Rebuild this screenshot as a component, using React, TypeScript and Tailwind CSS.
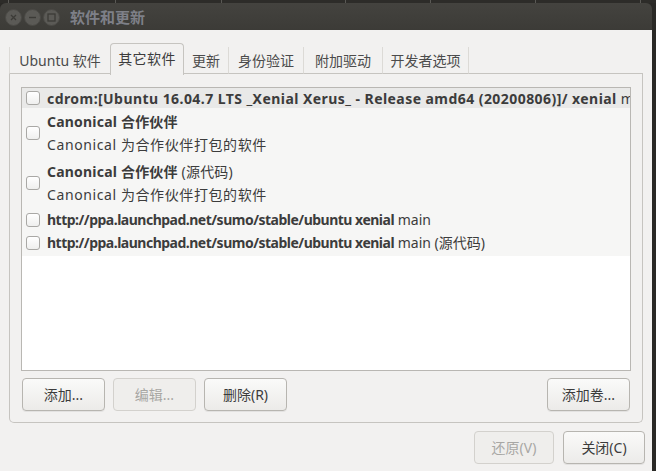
import React from "react";

const font = { fontFamily: '"Noto Sans", "Noto Sans CJK SC", sans-serif' };

function Checkbox() {
  return (
    <div className="w-[14px] h-[14px] rounded-[3px] border border-[#a9a8a5] bg-gradient-to-b from-[#ffffff] to-[#efefee] shrink-0" />
  );
}

function Btn({ children, w, disabled }: { children: React.ReactNode; w: string; disabled?: boolean }) {
  return (
    <div
      className={
        "h-[33px] rounded-[4px] border flex items-center justify-center text-[14px] " +
        w +
        (disabled
          ? " border-[#d3d1cd] bg-[#efeeec] text-[#a8a7a4]"
          : " border-[#b7b5b0] bg-gradient-to-b from-[#fafaf9] to-[#ecebe9] text-[#3c3c3c] shadow-[0_1px_0_rgba(0,0,0,0.06)]")
      }
    >
      {children}
    </div>
  );
}

export default function App() {
  const tabs = [
    { t: "Ubuntu 软件", w: "w-[101px]" },
    { t: "其它软件", w: "w-[74px]", active: true },
    { t: "更新", w: "w-[45px]" },
    { t: "身份验证", w: "w-[75px]" },
    { t: "附加驱动", w: "w-[79px]" },
    { t: "开发者选项", w: "w-[86px]" },
  ];
  return (
    <div className="w-[656px] h-[471px] bg-[#2a2926] overflow-hidden relative" style={font}>
      <div className="h-[3px] relative bg-[#2d2c29]">
        <div className="absolute left-[8px] top-0 w-px h-[3px] bg-[#5a5955]" />
        <div className="absolute left-[115px] top-0 w-px h-[3px] bg-[#5a5955]" />
        <div className="absolute left-[221px] top-0 w-px h-[3px] bg-[#5a5955]" />
        <div className="absolute left-[345px] top-0 w-px h-[3px] bg-[#5a5955]" />
        <div className="absolute left-[430px] top-0 w-px h-[3px] bg-[#5a5955]" />
        <div className="absolute left-[535px] top-0 w-px h-[3px] bg-[#5a5955]" />
        <div className="absolute left-[640px] top-0 w-px h-[3px] bg-[#5a5955]" />
      </div>
      <div className="w-[652px] h-[468px] flex flex-col">
        {/* title bar */}
        <div className="h-[27px] bg-gradient-to-b from-[#44433f] to-[#3c3b37] rounded-tr-[6px] rounded-tl-[6px] flex items-center pl-[5px]">
          <div className="flex items-center gap-[2px] mt-[1px]">
            <div className="w-[17px] h-[17px] rounded-full bg-[#5b5a56] border border-[#4a4945] flex items-center justify-center">
              <svg width="7" height="7" viewBox="0 0 7 7"><path d="M1 1L6 6M6 1L1 6" stroke="#3c3b37" strokeWidth="1.3" /></svg>
            </div>
            <div className="w-[17px] h-[17px] rounded-full bg-[#5b5a56] border border-[#4a4945] flex items-center justify-center">
              <svg width="9" height="9" viewBox="0 0 9 9"><path d="M1 4.5H8" stroke="#3c3b37" strokeWidth="1.4" /></svg>
            </div>
            <div className="w-[17px] h-[17px] rounded-full bg-[#5b5a56] border border-[#4a4945] flex items-center justify-center">
              <svg width="9" height="9" viewBox="0 0 9 9"><rect x="1" y="1" width="7" height="7" fill="none" stroke="#3c3b37" strokeWidth="1.3" /></svg>
            </div>
          </div>
          <div className="ml-[10px] text-[15px] font-bold text-[#7e8088] mt-[1px]">软件和更新</div>
        </div>
        {/* body */}
        <div className="flex-1 bg-[#f2f1f0] flex flex-col pl-[9px] pr-[9px] pt-[12px]">
          <div className="flex items-end h-[32px]">
            {tabs.map((tb, i) =>
              tb.active ? (
                <div
                  key={i}
                  className={"h-[32px] border border-b-0 border-[#c6c4c0] rounded-t-[4px] bg-[#f2f1f0] flex items-center justify-center text-[14px] tracking-[0.4px] text-[#3c3c3c] pb-[2px] relative top-[1px] " + tb.w}
                >
                  {tb.t}
                </div>
              ) : (
                <div
                  key={i}
                  className={
                    "h-[27px] border-b border-[#c6c4c0] flex items-center justify-center text-[14px] text-[#4b4b4b] " +
                    tb.w +
                    (i === 0 ? " border-l border-l-[#dcdad6]" : "") +
                    (i > 1 ? " border-r border-r-[#dcdad6]" : "")
                  }
                >
                  {tb.t}
                </div>
              )
            )}
            <div className="flex-1 h-[27px] border-b border-[#c6c4c0]" />
          </div>
          <div className="w-[634px] h-[349px] border border-t-0 border-[#c6c4c0] rounded-b-[5px] px-[11px] pt-[13px] flex flex-col">
            <div className="h-[284px] border border-[#b9b7b3] bg-white overflow-hidden flex flex-col text-[14px] text-[#3c3c3c]">
              <div className="h-[20px] bg-[#e9e9e8] flex items-center pl-[4px] whitespace-nowrap">
                <Checkbox />
                <span className="ml-[7px] font-bold tracking-[0.44px]">
                  cdrom:[Ubuntu 16.04.7 LTS _Xenial Xerus_ - Release amd64 (20200806)]/ xenial
                </span>
                <span className="ml-[4px]">main</span>
              </div>
              <div className="bg-[#f6f6f5] flex flex-col">
                <div className="h-[50px] flex items-center pl-[4px]">
                  <Checkbox />
                  <div className="ml-[7px] flex flex-col leading-[23px] whitespace-nowrap">
                    <span className="font-bold tracking-[0.2px]">Canonical 合作伙伴</span>
                    <span className="tracking-[0.6px]">Canonical 为合作伙伴打包的软件</span>
                  </div>
                </div>
                <div className="h-[50px] flex items-center pl-[4px]">
                  <Checkbox />
                  <div className="ml-[7px] flex flex-col leading-[23px] whitespace-nowrap">
                    <span className="tracking-[0.2px]">
                      <span className="font-bold">Canonical 合作伙伴</span> (源代码)
                    </span>
                    <span className="tracking-[0.6px]">Canonical 为合作伙伴打包的软件</span>
                  </div>
                </div>
                <div className="h-[23px] flex items-center pl-[4px] whitespace-nowrap">
                  <Checkbox />
                  <span className="ml-[7px]">
                    <span className="font-bold tracking-[-0.5px]">http://ppa.launchpad.net/sumo/stable/ubuntu xenial</span> main
                  </span>
                </div>
                <div className="h-[25px] flex items-center pl-[4px] pb-[2px] whitespace-nowrap">
                  <Checkbox />
                  <span className="ml-[7px]">
                    <span className="font-bold tracking-[-0.5px]">http://ppa.launchpad.net/sumo/stable/ubuntu xenial</span> main (源代码)
                  </span>
                </div>
              </div>
            </div>
            <div className="flex items-center mt-[7px]">
              <div className="ml-[1px]" />
              <Btn w="w-[83px]">添加...</Btn>
              <div className="w-[8px]" />
              <Btn w="w-[83px]" disabled>编辑...</Btn>
              <div className="w-[8px]" />
              <Btn w="w-[83px]">删除(R)</Btn>
              <div className="flex-1" />
              <Btn w="w-[83px]">添加卷...</Btn>
              <div className="mr-[1px]" />
            </div>
          </div>
          <div className="flex justify-end mt-[8px] mr-[-2px]">
            <Btn w="w-[80px]" disabled>还原(V)</Btn>
            <div className="w-[9px]" />
            <Btn w="w-[82px]">关闭(C)</Btn>
          </div>
        </div>
      </div>
    </div>
  );
}
